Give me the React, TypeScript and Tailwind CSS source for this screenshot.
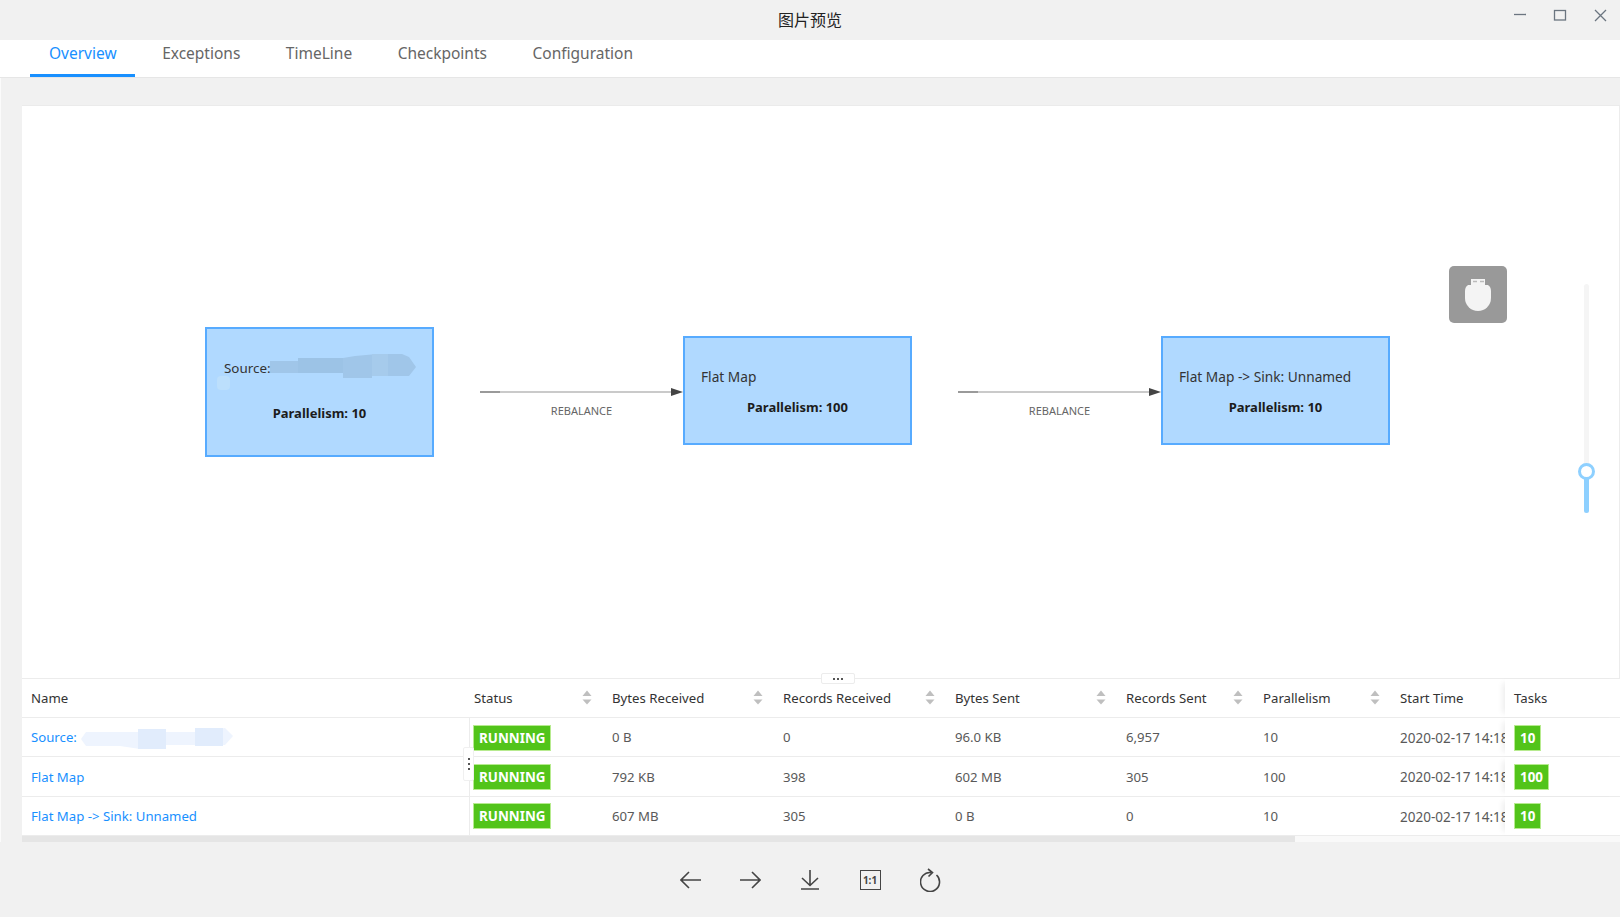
const FONT = "font-['Noto_Sans','Noto_Sans_CJK_SC',sans-serif]";
const COLS = "grid grid-cols-[447px_138px_171px_172px_171px_137px_137px_110px_115px]";

const tabs = ["Overview", "Exceptions", "TimeLine", "Checkpoints", "Configuration"];

const headers = ["Status", "Bytes Received", "Records Received", "Bytes Sent", "Records Sent", "Parallelism"];

const rows = [
    { name: "Source:", smudge: true, values: ["0 B", "0", "96.0 KB", "6,957", "10"], tasks: "10" },
    { name: "Flat Map", smudge: false, values: ["792 KB", "398", "602 MB", "305", "100"], tasks: "100" },
    { name: "Flat Map -> Sink: Unnamed", smudge: false, values: ["607 MB", "305", "0 B", "0", "10"], tasks: "10" },
];

const Sorter = () => (
    <svg width="10" height="15" viewBox="0 0 10 15" className="shrink-0">
        <path d="M5 0.5 L9.5 6 H0.5 Z" fill="#bfbfbf" />
        <path d="M5 14.5 L9.5 9.5 H0.5 Z" fill="#bfbfbf" />
    </svg>
);

const Tag = ({ text }: { text: string }) => (
    <span className="inline-flex h-[26px] items-center border border-[#b7eb8f] bg-[#52c41a] px-[5px] text-[13.4px] font-bold text-white">
        {text}
    </span>
);

const Edge = ({ className }: { className: string }) => (
    <div className={`absolute top-[278px] h-[30px] w-[203px] ${className}`}>
        <svg width="203" height="16" viewBox="0 0 203 16" className="block">
            <path d="M0 8 H192" stroke="#b9b9b9" strokeWidth="1.5" />
            <path d="M0 8 H20" stroke="#8a8a8a" strokeWidth="1.5" />
            <path d="M191 4 L203 8 L191 12 Z" fill="#444" />
        </svg>
        <div className="mt-[1px] text-center text-[11px] leading-[20px] text-[#666]">REBALANCE</div>
    </div>
);

const Node = ({ className, title, parallelism }: { className: string; title: string; parallelism: number }) => (
    <div className={`absolute h-[109px] w-[229px] border-2 border-[#57abff] bg-[#b0d9ff] px-[16px] pt-[28px] text-[13.7px] leading-[22px] text-[#333] ${className}`}>
        <div>{title}</div>
        <div className="mt-[8px] text-center text-[13px] font-bold text-[#1c1c1c]">Parallelism: {parallelism}</div>
    </div>
);

const ToolButton = ({ children }: { children: React.ReactNode }) => (
    <div className="flex w-[60px] items-center justify-center">{children}</div>
);

export default function App() {
    return (
        <div className={`flex h-[917px] w-[1620px] flex-col overflow-hidden bg-[#f1f1f1] ${FONT}`}>
            {/* window title */}
            <div className="relative flex h-10 shrink-0 items-center justify-center text-[16px] text-[#222]">
                图片预览
                <svg width="100" height="20" viewBox="0 0 100 20" className="absolute left-[1510px] top-[5px]" fill="none" stroke="#6b7580" strokeWidth="1.3">
                    <path d="M4 9.5 H16" />
                    <rect x="44.5" y="5.5" width="11" height="9.5" />
                    <path d="M85 5 L96 16 M96 5 L85 16" />
                </svg>
            </div>

            {/* tabs */}
            <div className="flex h-[38px] shrink-0 gap-[9.5px] border-b border-[#e6e6e6] bg-white pl-[30px] text-[15.5px] leading-[26px] text-[#666]">
                {tabs.map((tab, i) => (
                    <div
                        key={tab}
                        className={i === 0
                            ? "h-[37px] border-b-[3px] border-[#1890ff] pl-[19px] pr-[18px] text-[#1890ff]"
                            : "h-[37px] px-[18px]"}
                    >
                        {tab}
                    </div>
                ))}
            </div>

            <div className="shrink-0 border-l border-[#fbfbfb] pl-[21px] pt-[27px]">
                <div className="bg-white">
                    {/* job graph */}
                    <div className="relative h-[573px] border-t border-[#ebebeb]">
                        <div className="absolute left-[183px] top-[221px] h-[130px] w-[229px] border-2 border-[#57abff] bg-[#b0d9ff] px-[17px] pt-[28px] text-[13.4px] leading-[22px] text-[#333]">
                            <svg width="229" height="130" viewBox="0 0 229 130" className="absolute left-[-2px] top-[-2px]">
                                <path d="M65 34 H120 L150 29 L172 27 H197 L204 30 L211 40 L204 49 H167 V51 H138 V46 H65 Z" fill="#a0c6e9" />
                                <rect x="93" y="31" width="45" height="15" fill="#9cc3e6" />
                                <rect x="167" y="27" width="16" height="22" fill="#a6cbec" />
                                <rect x="12" y="49" width="13" height="14" rx="4" fill="#bcdffc" />
                            </svg>
                            <div className="relative">Source:</div>
                            <div className="relative mt-[23px] text-center text-[13px] font-bold text-[#1c1c1c]">Parallelism: 10</div>
                        </div>
                        <Edge className="left-[458px]" />
                        <Node className="left-[661px] top-[230px]" title="Flat Map" parallelism={100} />
                        <Edge className="left-[936px]" />
                        <Node className="left-[1139px] top-[230px]" title="Flat Map -> Sink: Unnamed" parallelism={10} />

                        <div className="absolute left-[1427px] top-[160px] flex h-[57px] w-[58px] items-center justify-center rounded-[5px] bg-[#999]">
                            <svg width="28" height="32" viewBox="0 0 28 32">
                                <path d="M7 0 H21 V6 H7 Z" fill="#f4f4f4" />
                                <path d="M4 6 H24 Q27 8 27 12 V19 A13 13 0 0 1 1 19 V12 Q1 8 4 6 Z" fill="#f4f4f4" />
                                <path d="M9 2.5 H13 M16 2.5 H20" stroke="#bbb" strokeWidth="1.5" />
                            </svg>
                        </div>

                        {/* zoom slider */}
                        <div className="absolute left-[1562px] top-[178px] h-[229px] w-[5px] rounded-full bg-[#f5f5f5]">
                            <div className="absolute bottom-0 h-[42px] w-full rounded-full bg-[#8ed0ff]" />
                            <div className="absolute left-[-6px] top-[179px] h-[17px] w-[17px] rounded-full border-[3px] border-[#8ed0ff] bg-white" />
                        </div>

                        <div className="absolute inset-y-0 right-0 w-px bg-[#ececec]" />
                    </div>

                    {/* vertices table */}
                    <div className="relative text-[13.2px] text-[#595959]">
                        <div className={`${COLS} h-[40px] items-center border-y border-[#ececec] text-[#333]`}>
                            <div className="pl-[9px] pt-[2px]">Name</div>
                            {headers.map((h) => (
                                <div key={h} className="flex items-center justify-between pl-[5px] pr-[15px] first:h-full first:border-l first:border-[#ececec]">
                                    <span className="pt-[2px]">{h}</span>
                                    <Sorter />
                                </div>
                            ))}
                            <div className="pl-[5px] pt-[2px]">Start Time</div>
                            <div className="flex h-full items-center pl-[9px] pt-[2px] shadow-[-6px_0_6px_-4px_rgba(0,0,0,0.08)]">Tasks</div>
                        </div>
                        {rows.map((row) => (
                            <div key={row.name} className={`${COLS} h-[39.4px] items-center border-b border-[#ececec]`}>
                                <div className="flex items-center pl-[9px] pt-[2px] text-[#1890ff]">
                                    {row.name}
                                    {row.smudge && (
                                        <svg width="155" height="24" viewBox="0 0 155 24" className="ml-[3px]">
                                            <path d="M6 6 H120 L145 2 L153 10 L145 19 H60 V23 L40 20 H6 L1 13 Z" fill="#eef4fe" />
                                            <rect x="58" y="3" width="28" height="20" fill="#e1ecfc" />
                                            <rect x="115" y="2" width="28" height="18" fill="#e1ecfc" />
                                        </svg>
                                    )}
                                </div>
                                <div className="flex h-full items-center border-l border-[#ececec] pl-[3px] pt-[1px]"><Tag text="RUNNING" /></div>
                                {row.values.map((v, i) => (
                                    <div key={i} className="pl-[5px] pt-[2px]">{v}</div>
                                ))}
                                <div className="overflow-hidden whitespace-nowrap pl-[5px] pt-[2px] text-[13.5px]">2020-02-17 14:18:30</div>
                                <div className="flex h-full items-center pl-[9px] pt-[1px] shadow-[-6px_0_6px_-4px_rgba(0,0,0,0.08)]"><Tag text={row.tasks} /></div>
                            </div>
                        ))}
                        <div className="h-[6px] bg-[#f9f9f9]">
                            <div className="h-full w-[1273px] bg-[#e5e5e5]" />
                        </div>

                        {/* resize handles */}
                        <div className="absolute left-[799px] top-[-5px] flex h-[11px] w-[34px] items-center justify-center gap-[2px] rounded-[2px] border border-[#ececec] bg-white">
                            <span className="h-[2px] w-[2px] bg-[#555]" />
                            <span className="h-[2px] w-[2px] bg-[#555]" />
                            <span className="h-[2px] w-[2px] bg-[#555]" />
                        </div>
                        <div className="absolute left-[441px] top-[69px] flex h-[34px] w-[11px] flex-col items-center justify-center gap-[3px] rounded-[2px] border border-[#f0f0f0] bg-white">
                            <span className="h-[2px] w-[2px] bg-[#555]" />
                            <span className="h-[2px] w-[2px] bg-[#555]" />
                            <span className="h-[2px] w-[2px] bg-[#555]" />
                        </div>
                    </div>
                </div>
            </div>

            {/* preview toolbar */}
            <div className="flex flex-1 items-center justify-center text-[#444]">
                <ToolButton>
                    <svg width="22" height="18" viewBox="0 0 22 18" fill="none" stroke="currentColor" strokeWidth="1.6" className="ml-[2px]">
                        <path d="M1 9 H21 M9 1 L1 9 L9 17" />
                    </svg>
                </ToolButton>
                <ToolButton>
                    <svg width="22" height="18" viewBox="0 0 22 18" fill="none" stroke="currentColor" strokeWidth="1.6">
                        <path d="M1 9 H21 M13 1 L21 9 L13 17" />
                    </svg>
                </ToolButton>
                <ToolButton>
                    <svg width="20" height="20" viewBox="0 0 20 20" fill="none" stroke="currentColor" strokeWidth="1.6">
                        <path d="M10 0 V15 M2 8 L10 15.5 L18 8 M1 19 H19" />
                    </svg>
                </ToolButton>
                <ToolButton>
                    <div className="flex h-[20px] w-[21px] items-center justify-center border-[1.5px] border-[#444] text-[10px] font-bold leading-none">1:1</div>
                </ToolButton>
                <ToolButton>
                    <svg width="22" height="24" viewBox="0 0 22 24" fill="none" stroke="currentColor" strokeWidth="1.6" className="ml-[2px]">
                        <path d="M16.5 7 A9.5 9.5 0 1 1 11 4.5 M8 1 L12.5 4.5 L8.5 8.5" />
                    </svg>
                </ToolButton>
            </div>
        </div>
    );
}
